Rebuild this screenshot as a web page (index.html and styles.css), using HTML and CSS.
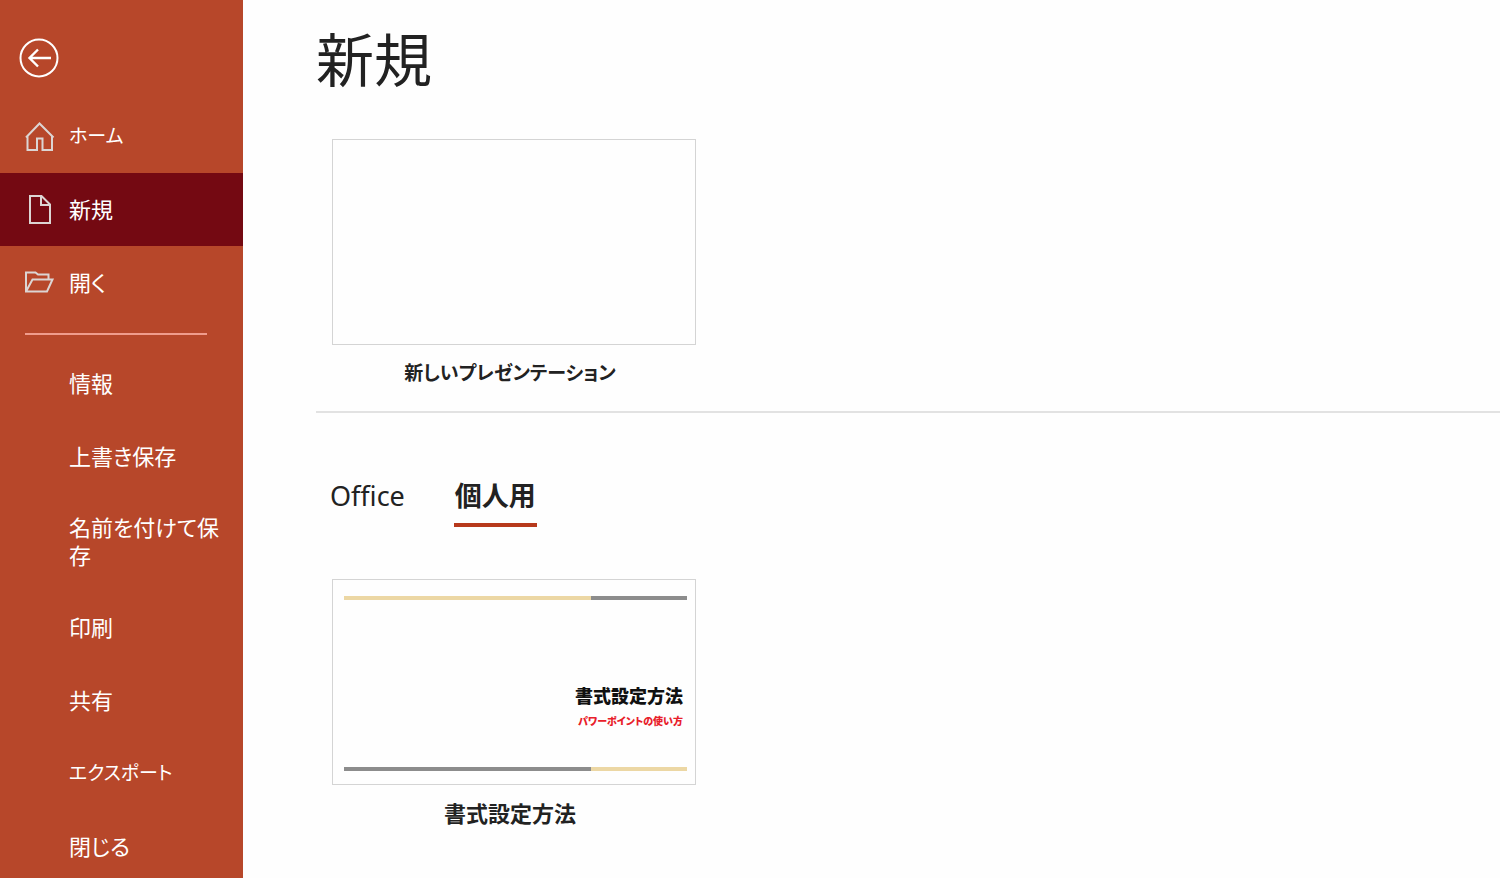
FILE: index.html
```html
<!DOCTYPE html>
<html lang="ja">
<head>
<meta charset="utf-8">
<meta name="viewport" content="width=device-width, initial-scale=1">
<title>新規</title>
<link rel="stylesheet" href="styles.css">
</head>
<body>
<div class="app">
  <aside class="sidebar">
    <button class="back" type="button" aria-label="戻る">
      <svg width="40" height="40" viewBox="0 0 40 40" fill="none" stroke="currentColor" stroke-width="2">
        <circle cx="20" cy="20" r="18.5"/>
        <path d="M32 20H11M19 11.5L10.5 20L19 28.5" stroke-width="2.4"/>
      </svg>
    </button>
    <nav class="nav">
      <a class="item" href="#home">
        <svg class="icon" width="30" height="30" viewBox="0 0 30 30" fill="none" stroke="currentColor" stroke-width="2">
          <path d="M1 15.500L14.500 1.500L28.500 15.500M2.500 13.500V28H12V16.500H17.500V28H27V13.500"/>
        </svg>
        <span class="label kana">ホーム</span>
      </a>
      <a class="item current" href="#new" aria-current="page">
        <svg class="icon" width="30" height="30" viewBox="0 0 30 30" fill="none" stroke="currentColor" stroke-width="2">
          <path d="M5 1H16.500L25 9.500V28H5ZM16 1V10H25"/>
        </svg>
        <span class="label">新規</span>
      </a>
      <a class="item" href="#open">
        <svg class="icon" width="30" height="30" viewBox="0 0 30 30" fill="none" stroke="currentColor" stroke-width="2">
          <path d="M1 23.500V4.500H10.500L13 6.500H23.500V11.500M1 23.500L7.500 11.500H27.500L22 23.500Z"/>
        </svg>
        <span class="label">開く</span>
      </a>
      <hr class="rule">
      <a class="item plain" href="#info">情報</a>
      <a class="item plain" href="#save">上書き保存</a>
      <a class="item plain" href="#save-as">名前を付けて保存</a>
      <a class="item plain" href="#print">印刷</a>
      <a class="item plain" href="#share">共有</a>
      <a class="item plain kana" href="#export">エクスポート</a>
      <a class="item plain" href="#close">閉じる</a>
    </nav>
  </aside>
  <main class="main">
    <h1 class="title">新規</h1>
    <section class="blank">
      <button class="card" type="button">
        <span class="thumb"></span>
        <span class="caption kana">新しいプレゼンテーション</span>
      </button>
    </section>
    <div class="tabs" role="tablist">
      <button class="tab" type="button" role="tab" aria-selected="false">Office</button>
      <button class="tab selected" type="button" role="tab" aria-selected="true">個人用</button>
    </div>
    <section class="templates">
      <button class="card" type="button">
        <span class="thumb slide">
          <span class="bar bar-top"></span>
          <span class="slide-text">
            <span class="slide-title">書式設定方法</span>
            <span class="slide-sub">パワーポイントの使い方</span>
          </span>
          <span class="bar bar-bottom"></span>
        </span>
        <span class="caption">書式設定方法</span>
      </button>
    </section>
  </main>
</div>
</body>
</html>
```
FILE: styles.css
```css
* {
  box-sizing: border-box;
}

body {
  margin: 0;
  background: #fefefe;
  color: #222;
  font-family: "Noto Sans", "Noto Sans CJK JP", sans-serif;
  font-size: 22px;
  line-height: 28px;
  font-feature-settings: "palt";
}

button {
  padding: 0;
  border: 0;
  background: none;
  color: inherit;
  font: inherit;
  font-feature-settings: inherit;
  cursor: pointer;
}

.app {
  display: flex;
  min-height: 100vh;
}

.sidebar {
  flex: 0 0 243px;
  padding-top: 38px;
  background: #b7472a;
  color: #fff;
}

.back {
  display: block;
  width: 40px;
  height: 40px;
  margin: 0 0 22px 19px;
}

.back svg,
.icon {
  display: block;
}

.item {
  display: flex;
  align-items: center;
  gap: 14px;
  min-height: 73px;
  padding: 21px 20px 21px 25px;
  color: inherit;
  text-decoration: none;
}

.label {
  padding-bottom: 2px;
}

.kana {
  font-size: 19px;
}

.icon {
  flex: none;
  color: #dcd5d3;
}

.current {
  background: #740912;
}

.plain {
  padding: 20px 20px 22px 69px;
}

.rule {
  height: 2px;
  margin: 14px 36px 12px 25px;
  border: 0;
  background: #f09c8c;
}

.main {
  flex: 1;
  min-width: 0;
  padding: 24px 0 24px 73px;
}

.title {
  margin: 0;
  font-size: 58px;
  font-weight: 400;
  line-height: 72px;
}

.blank {
  padding: 43px 16px 24px;
  border-bottom: 2px solid #e2e2e2;
}

.card {
  display: block;
  width: 364px;
  max-width: 100%;
}

.thumb {
  display: block;
  height: 206px;
  border: 1px solid #d4d4d4;
  background: #fefefe;
}

.caption {
  display: block;
  margin-top: 14px;
  padding-right: 8px;
  font-weight: 700;
}

.tabs {
  display: flex;
  gap: 48px;
  padding: 65px 13px 52px;
}

.tab {
  padding: 0 1px 9px;
  border-bottom: 4px solid transparent;
  font-size: 27px;
  line-height: 36px;
}

.selected {
  border-color: #b7391c;
  font-weight: 700;
}

.templates {
  padding: 0 16px;
}

.slide {
  display: flex;
  flex-direction: column;
  padding: 16px 8px 13px 11px;
}

.bar {
  height: 4px;
}

.bar-top {
  background: linear-gradient(to right, #ecd7a4 72%, #8c8c8c 72%);
}

.bar-bottom {
  background: linear-gradient(to right, #8c8c8c 72%, #ecd7a4 72%);
}

.slide-text {
  display: flex;
  flex: 1;
  flex-direction: column;
  justify-content: flex-end;
  padding: 0 4px 35px 0;
  text-align: right;
}

.slide-title {
  color: #111;
  font-size: 18px;
  font-weight: 900;
  line-height: 28px;
}

.slide-sub {
  color: #e8202a;
  font-size: 10px;
  font-weight: 900;
  line-height: 22px;
}
```
